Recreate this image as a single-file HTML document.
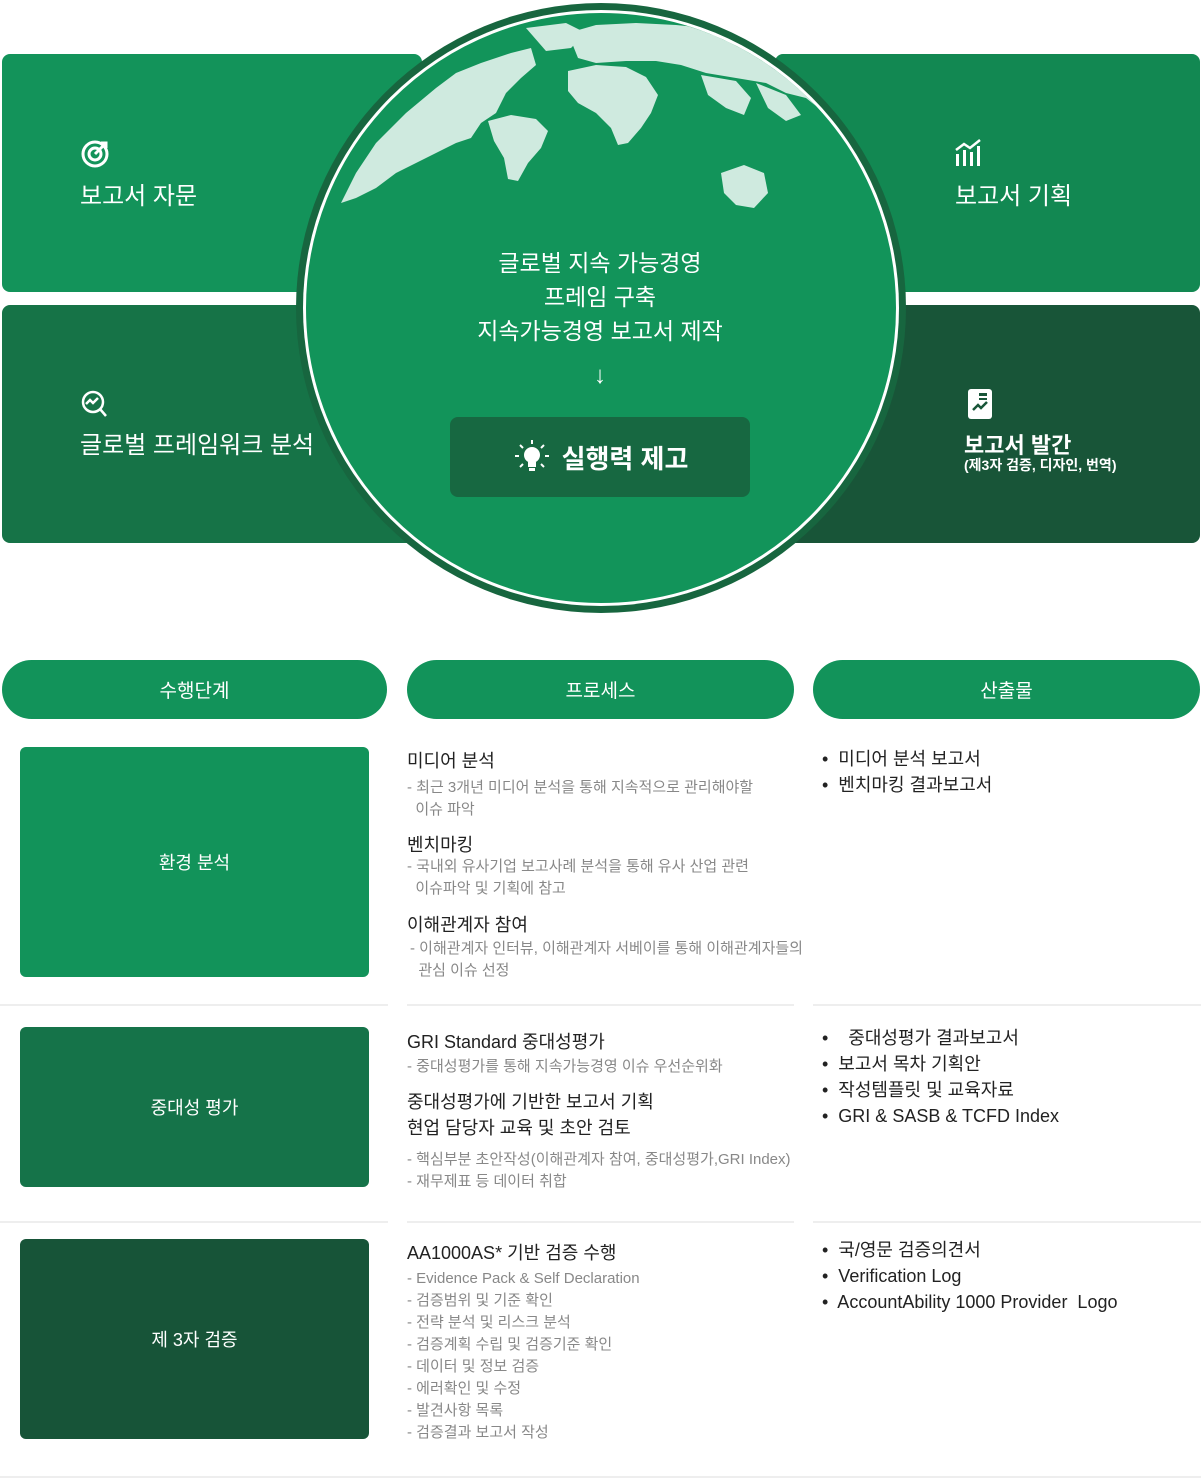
<!DOCTYPE html>
<html><head><meta charset="utf-8"><style>
*{margin:0;padding:0;box-sizing:border-box}
body{width:1201px;height:1479px;background:#fff;font-family:"Liberation Sans","Noto Sans CJK KR",sans-serif;position:relative;overflow:hidden}
.a{position:absolute}
.box{position:absolute;border-radius:8px}
.t{color:#fff;font-size:24px}
.pill{position:absolute;top:660px;height:59px;border-radius:30px;background:#12935a;color:#fff;font-size:19px;display:flex;align-items:center;justify-content:center}
.rb{position:absolute;left:20px;width:349px;border-radius:6px;color:#fff;font-size:18px;display:flex;align-items:center;justify-content:center}
.h{position:absolute;font-size:18px;color:#222}
.s{position:absolute;font-size:15px;color:#888;line-height:22px}
.li{position:absolute;font-size:18px;color:#222;line-height:26px}
.sep{position:absolute;height:2px;background:#eee}
</style></head><body>
<div class="box" style="left:2px;top:54px;width:420px;height:238px;background:#13935a"></div>
<div class="box" style="left:775px;top:54px;width:425px;height:238px;background:#128852"></div>
<div class="box" style="left:2px;top:305px;width:420px;height:238px;background:#167347"></div>
<div class="box" style="left:775px;top:305px;width:425px;height:238px;background:#185538"></div>

<svg class="a" style="left:80px;top:138px" width="32" height="32" viewBox="0 0 32 32" fill="none" stroke="#fff" stroke-width="3"><circle cx="15" cy="16" r="12"/><circle cx="15" cy="16" r="6"/><path d="M15 16L26 5M21 5h5v5"/></svg>
<div class="a t" style="left:80px;top:176px">보고서 자문</div>
<svg class="a" style="left:80px;top:390px" width="32" height="30" viewBox="0 0 32 30" fill="none" stroke="#fff" stroke-width="2.5"><circle cx="13" cy="12" r="10"/><path d="M6 14l4-4 3 3 5-5M20 19l6 7"/></svg>
<div class="a t" style="left:80px;top:425px">글로벌 프레임워크 분석</div>
<svg class="a" style="left:955px;top:138px" width="32" height="30" viewBox="0 0 32 30" fill="#fff"><rect x="1" y="16" width="3" height="12"/><rect x="8" y="12" width="3" height="16"/><rect x="15" y="14" width="3" height="14"/><rect x="22" y="8" width="3" height="20"/><path d="M1 12l8-6 6 4 10-8" stroke="#fff" stroke-width="2.5" fill="none"/></svg>
<div class="a t" style="left:955px;top:176px">보고서 기획</div>
<svg class="a" style="left:967px;top:388px" width="26" height="32" viewBox="0 0 26 32"><rect x="1" y="1" width="24" height="30" rx="3" fill="#fff"/><path d="M6 22l5-5 3 3 6-6" stroke="#185538" stroke-width="2.5" fill="none"/><rect x="12" y="5" width="8" height="3" fill="#185538"/><rect x="12" y="10" width="8" height="2" fill="#185538"/></svg>
<div class="a" style="left:964px;top:428px;color:#fff;font-size:22px;font-weight:bold">보고서 발간</div>
<div class="a" style="left:964px;top:455px;color:#fff;font-size:14px;font-weight:bold">(제3자 검증, 디자인, 번역)</div>

<svg class="a" style="left:296px;top:3px" width="610" height="610" viewBox="0 0 610 610">
<defs><clipPath id="c"><circle cx="305" cy="305" r="295"/></clipPath></defs>
<circle cx="305" cy="305" r="305" fill="#17663f"/>
<circle cx="305" cy="305" r="298" fill="#fff"/>
<circle cx="305" cy="305" r="296" fill="#12945a"/>
<g clip-path="url(#c)" fill="#cfeadf">
<path d="M45 200 L60 170 L80 140 L110 110 L140 85 L160 70 L185 60 L215 50 L235 45 L240 62 L225 75 L210 90 L200 110 L185 120 L175 135 L160 140 L140 150 L120 160 L100 170 L80 185 L60 195 Z"/>
<path d="M230 25 L270 20 L290 30 L275 45 L250 48 Z"/>
<path d="M192 118 L215 112 L240 116 L252 128 L245 145 L232 160 L222 178 L212 176 L208 155 L198 138 Z"/>
<path d="M272 30 L300 22 L340 20 L380 22 L420 26 L460 34 L500 50 L525 70 L545 100 L555 120 L535 115 L510 95 L490 90 L470 80 L440 75 L410 70 L385 62 L360 58 L330 58 L300 60 L282 55 Z"/>
<path d="M272 68 L300 62 L330 64 L350 74 L362 92 L355 110 L345 125 L332 140 L322 142 L315 125 L300 110 L282 100 L272 88 Z"/>
<path d="M405 72 L440 78 L455 95 L448 112 L430 105 L412 92 Z"/>
<path d="M425 170 L448 162 L468 170 L472 190 L458 205 L440 202 L428 190 Z"/>
<path d="M460 80 L490 92 L505 112 L490 118 L472 105 Z"/>
</g>
<circle cx="305" cy="305" r="296" fill="none" stroke="#fff" stroke-width="2"/>
</svg>
<div class="a" style="left:400px;top:246px;width:400px;text-align:center;color:#fff;font-size:23px;line-height:34px">글로벌 지속 가능경영<br>프레임 구축<br>지속가능경영 보고서 제작</div>
<div class="a" style="left:400px;top:362px;width:400px;text-align:center;color:#fff;font-size:24px">↓</div>
<div class="a" style="left:450px;top:417px;width:300px;height:80px;border-radius:8px;background:#176841;display:flex;align-items:center;justify-content:center;color:#fff;font-size:26px;font-weight:bold">
<svg width="40" height="40" viewBox="0 0 40 40" style="margin-right:10px" fill="#fff"><circle cx="20" cy="18" r="8"/><rect x="16" y="25" width="8" height="5"/><rect x="17" y="31" width="6" height="3"/><g stroke="#fff" stroke-width="2"><path d="M20 3v4M8 8l3 3M32 8l-3 3M3 19h4M33 19h4M8 30l3-3M32 30l-3-3"/></g></svg>실행력 제고</div>

<div class="pill" style="left:2px;width:385px">수행단계</div>
<div class="pill" style="left:407px;width:387px">프로세스</div>
<div class="pill" style="left:813px;width:387px">산출물</div>

<div class="rb" style="top:747px;height:230px;background:#12935a">환경 분석</div>
<div class="rb" style="top:1027px;height:160px;background:#157349">중대성 평가</div>
<div class="rb" style="top:1239px;height:200px;background:#175438">제 3자 검증</div>

<div class="h" style="left:407px;top:747px">미디어 분석</div>
<div class="s" style="left:407px;top:777px">- 최근 3개년 미디어 분석을 통해 지속적으로 관리해야할<br>&nbsp;&nbsp;이슈 파악</div>
<div class="h" style="left:407px;top:831px">벤치마킹</div>
<div class="s" style="left:407px;top:856px">- 국내외 유사기업 보고사례 분석을 통해 유사 산업 관련<br>&nbsp;&nbsp;이슈파악 및 기획에 참고</div>
<div class="h" style="left:407px;top:911px">이해관계자 참여</div>
<div class="s" style="left:410px;top:938px">- 이해관계자 인터뷰, 이해관계자 서베이를 통해 이해관계자들의<br>&nbsp;&nbsp;관심 이슈 선정</div>
<div class="li" style="left:822px;top:746px">•&nbsp; 미디어 분석 보고서<br>•&nbsp; 벤치마킹 결과보고서</div>

<div class="sep" style="left:0;top:1004px;width:388px"></div>
<div class="sep" style="left:407px;top:1004px;width:387px"></div>
<div class="sep" style="left:813px;top:1004px;width:388px"></div>

<div class="h" style="left:407px;top:1028px">GRI Standard 중대성평가</div>
<div class="s" style="left:407px;top:1056px">- 중대성평가를 통해 지속가능경영 이슈 우선순위화</div>
<div class="h" style="left:407px;top:1089px;line-height:26px">중대성평가에 기반한 보고서 기획<br>현업 담당자 교육 및 초안 검토</div>
<div class="s" style="left:407px;top:1149px">- 핵심부분 초안작성(이해관계자 참여, 중대성평가,GRI Index)<br>- 재무제표 등 데이터 취합</div>
<div class="li" style="left:822px;top:1025px">•&nbsp;&nbsp;&nbsp; 중대성평가 결과보고서<br>•&nbsp; 보고서 목차 기획안<br>•&nbsp; 작성템플릿 및 교육자료<br>•&nbsp; GRI &amp; SASB &amp; TCFD Index</div>

<div class="sep" style="left:0;top:1221px;width:388px"></div>
<div class="sep" style="left:407px;top:1221px;width:387px"></div>
<div class="sep" style="left:813px;top:1221px;width:388px"></div>

<div class="h" style="left:407px;top:1239px">AA1000AS* 기반 검증 수행</div>
<div class="s" style="left:407px;top:1268px">- Evidence Pack &amp; Self Declaration<br>- 검증범위 및 기준 확인<br>- 전략 분석 및 리스크 분석<br>- 검증계획 수립 및 검증기준 확인<br>- 데이터 및 정보 검증<br>- 에러확인 및 수정<br>- 발견사항 목록<br>- 검증결과 보고서 작성</div>
<div class="li" style="left:822px;top:1237px">•&nbsp; 국/영문 검증의견서<br>•&nbsp; Verification Log<br>•&nbsp; AccountAbility 1000 Provider&nbsp; Logo</div>

<div class="sep" style="left:0;top:1476px;width:1201px"></div>
</body></html>
